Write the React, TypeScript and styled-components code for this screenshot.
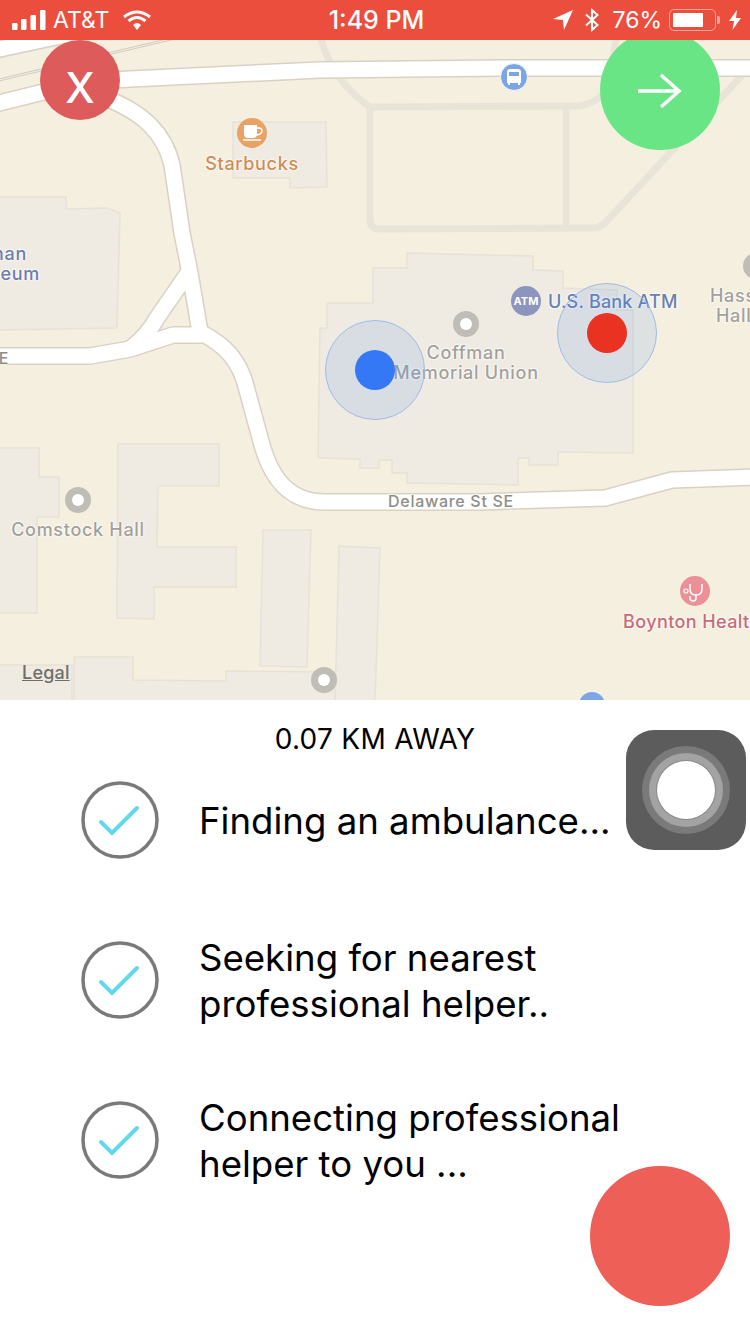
import styled, { createGlobalStyle } from "styled-components";

const GlobalStyle = createGlobalStyle`
  html, body {
    margin: 0;
    padding: 0;
    background: #fff;
    font-family: Inter, "Liberation Sans", sans-serif;
  }
`;

const buildings = [
  "233,122 326,122 327,187 290,188 290,178 233,178",
  "-2,197 66,197 66,209 107,208 120,213 117,328 -2,330",
  "320,328 327,328 327,303 373,303 373,268 407,268 407,253 533,256 533,270 563,271 563,288 617,290 617,310 633,310 633,453 558,452 558,465 529,465 529,458 518,458 518,485 407,483 407,473 392,473 392,460 379,460 379,468 360,468 360,459 318,458",
  "-2,448 39,448 39,477 59,477 59,517 37,517 37,613 -2,613",
  "118,444 219,444 219,486 158,486 157,547 236,547 236,587 154,587 154,619 117,618",
  "263,530 311,530 307,667 260,666",
  "339,546 380,548 375,702 335,702",
  "74,657 133,657 133,680 226,681 226,671 335,672 335,702 74,702",
  "-2,665 72,665 72,702 -2,702",
];

const roads = [
  "M-5 104 L60 88 Q90 81 130 79 L320 70 L500 68 L750 68",
  "M100 96 C145 112 165 135 172 165 L182 233 L190 273 L200 332 C225 345 240 360 247 390 L262 445 C272 480 290 502 325 502 L480 502 L605 498 L672 480 L755 477",
  "M-5 356 L90 356 L130 349 L173 335 L204 335",
  "M130 349 Q148 335 157 318 L188 273",
  "M-5 50 L70 34",
];

const serviceRoads = [
  "M320 36 C328 65 345 90 370 107 L370 220 Q370 229 380 229 L592 228 Q600 228 606 222 L745 72",
  "M370 107 L580 106 Q600 102 610 85 L616 38",
  "M566 107 L566 228",
];

const MapDrawing = () => (
  <MapSvg viewBox="0 40 750 660">
    {buildings.map((points) => (
      <polygon key={points} points={points} fill="#efebe3" stroke="#e6e2d5" strokeWidth="1.5" />
    ))}
    {serviceRoads.map((d) => (
      <path key={d} d={d} fill="none" stroke="#e8e5d8" strokeWidth="7" />
    ))}
    <path d="M-5 81 L175 38" fill="none" stroke="#cfcbc0" strokeWidth="3" />
    <path d="M-5 81 L175 38" fill="none" stroke="#f5efe0" strokeWidth="1" />
    {roads.map((d) => (
      <path key={d + "edge"} d={d} fill="none" stroke="#d9d1c4" strokeWidth="18" strokeLinejoin="round" />
    ))}
    {roads.map((d) => (
      <path key={d} d={d} fill="none" stroke="#ffffff" strokeWidth="15" strokeLinejoin="round" />
    ))}

    {[
      [466, 324],
      [78, 500],
      [324, 680],
      [756, 266],
    ].map(([cx, cy]) => (
      <g key={cx}>
        <circle cx={cx} cy={cy} r="13" fill="#bfbdb6" />
        <circle cx={cx} cy={cy} r="6" fill="#fff" />
      </g>
    ))}

    <circle cx="252" cy="133" r="15" fill="#e8a264" />
    <path d="M244 125 H257 V134 Q257 138 253 138 H248 Q244 138 244 134 Z" fill="#fff" />
    <path d="M257 128 H259 Q262 128 262 131 Q262 134 257 135" fill="none" stroke="#fff" strokeWidth="1.5" />
    <path d="M243 140 H261" stroke="#fff" strokeWidth="1.5" />

    <circle cx="514" cy="77" r="13.5" fill="#7ba5e6" stroke="#f5f7fa" strokeWidth="1" />
    <path d="M507 72 Q507 69 510 69 H518 Q521 69 521 72 V83 H507 Z" fill="#fff" />
    <rect x="509" y="72" width="10" height="4" fill="#7ba5e6" />
    <path d="M509 83 V85 M519 83 V85" stroke="#fff" strokeWidth="2" />

    <circle cx="695" cy="591" r="15" fill="#ea9096" />
    <path d="M690 584 V589 Q690 595 696 595 Q702 595 702 589 V584" fill="none" stroke="#fff" strokeWidth="1.5" />
    <path d="M696 595 V598 Q696 601 693 601 Q690 601 690 598 V596" fill="none" stroke="#fff" strokeWidth="1.5" />
    <circle cx="686" cy="591" r="2" fill="none" stroke="#fff" strokeWidth="1.2" />

    <circle cx="592" cy="705" r="13" fill="#7ba5e6" />
  </MapSvg>
);

const Cell = () => (
  <svg width="34" height="20" viewBox="0 0 34 20">
    <rect x="0" y="13" width="5.5" height="7" rx="1.2" fill="#fff" />
    <rect x="9" y="9" width="5.5" height="11" rx="1.2" fill="#fff" />
    <rect x="18.5" y="5" width="5.5" height="15" rx="1.2" fill="#fff" />
    <rect x="28" y="0" width="5.5" height="20" rx="1.2" fill="#fff" />
  </svg>
);

const Wifi = () => (
  <svg width="28" height="20" viewBox="0 0 28 20">
    <path d="M1 7 Q14 -3 27 7" fill="none" stroke="#fff" strokeWidth="3" />
    <path d="M5.5 11 Q14 4 22.5 11" fill="none" stroke="#fff" strokeWidth="3" />
    <path d="M10 15 Q14 11 18 15 L14 20 Z" fill="#fff" />
  </svg>
);

const LocationArrow = () => (
  <LocationIcon width="20" height="20" viewBox="0 0 20 20">
    <path d="M0 9 L20 0 L11 20 L10 10 Z" fill="#fff" />
  </LocationIcon>
);

const Bluetooth = () => (
  <svg width="14" height="24" viewBox="0 0 14 24">
    <path d="M1 6.5 L12.5 17 L7 22 V2 L12.5 7 L1 17.5" fill="none" stroke="#fff" strokeWidth="2" />
  </svg>
);

const Bolt = () => (
  <svg width="12" height="20" viewBox="0 0 12 20">
    <path d="M8 0 L0 11 H5 L3.5 20 L12 8 H7 Z" fill="#fff" />
  </svg>
);

const Arrow = () => (
  <svg width="44" height="38" viewBox="0 0 44 38">
    <path d="M0 19 H41 M23 3 L41 19 L23 35" fill="none" stroke="#fff" strokeWidth="3.5" />
  </svg>
);

const Check = () => (
  <svg width="78" height="78" viewBox="0 0 78 78">
    <circle cx="39" cy="39" r="37" fill="none" stroke="#7a7a7a" strokeWidth="3.5" />
    <path d="M20 41 L31 52 L56 27" fill="none" stroke="#5fd8f0" strokeWidth="4" strokeLinecap="round" />
  </svg>
);

const steps = [
  ["Finding an ambulance..."],
  ["Seeking for nearest", "professional helper.."],
  ["Connecting professional", "helper to you ..."],
];

const App = () => {
  return (
    <Screen>
      <GlobalStyle />
      <StatusBar>
        <StatusGroup>
          <Cell />
          <Carrier>AT&amp;T</Carrier>
          <Wifi />
        </StatusGroup>
        <Clock>1:49 PM</Clock>
        <StatusGroup>
          <LocationArrow />
          <Bluetooth />
          <Percent>76%</Percent>
          <Battery>
            <BatteryFill />
          </Battery>
          <BatteryCap />
          <Bolt />
        </StatusGroup>
      </StatusBar>

      <MapArea>
        <MapDrawing />

        <Label $x={252} $y={163} $color="#d08b4e">Starbucks</Label>
        <Label $x={27} $y={253} $color="#6d7cab" $anchor="end">man</Label>
        <Label $x={40} $y={273} $color="#6d7cab" $anchor="end">Museum</Label>
        <Label $x={9} $y={358} $color="#8f8d88" $anchor="end" $size={16}>St SE</Label>
        <Label $x={466} $y={352} $color="#a3a09a">Coffman</Label>
        <Label $x={466} $y={372} $color="#a3a09a">Memorial Union</Label>
        <Label $x={548} $y={301} $color="#6a7fb0" $anchor="start" $spacing={0.2}>U.S. Bank ATM</Label>
        <Label $x={710} $y={295} $color="#a3a09a" $anchor="start">Hass</Label>
        <Label $x={716} $y={315} $color="#a3a09a" $anchor="start">Hall</Label>
        <Label $x={78} $y={529} $color="#a3a09a">Comstock Hall</Label>
        <Label $x={451} $y={501} $color="#8f8d88" $size={16}>Delaware St SE</Label>
        <Label $x={623} $y={621} $color="#c76c74" $anchor="start" $spacing={0.4}>Boynton Health</Label>
        <LegalLink>Legal</LegalLink>
        <AtmPin>ATM</AtmPin>

        <Pulse $x={375} $y={370}>
          <PulseDot $color="#3478f6" />
        </Pulse>
        <Pulse $x={607} $y={333}>
          <PulseDot $color="#e93222" />
        </Pulse>

        <CloseButton>X</CloseButton>
        <NextButton>
          <Arrow />
        </NextButton>
      </MapArea>

      <Panel>
        <Distance>0.07 KM AWAY</Distance>
        <StepList>
          {steps.map((lines) => (
            <Step key={lines[0]}>
              <Check />
              <StepText>
                {lines.map((line) => (
                  <div key={line}>{line}</div>
                ))}
              </StepText>
            </Step>
          ))}
        </StepList>
        <AssistiveTouch>
          <TouchOuter>
            <TouchMiddle>
              <TouchCore />
            </TouchMiddle>
          </TouchOuter>
        </AssistiveTouch>
        <ActionButton />
      </Panel>
    </Screen>
  );
};

const Screen = styled.div`
  width: 750px;
  height: 1334px;
  display: flex;
  flex-direction: column;
  overflow: hidden;
  background: #fff;
`;

const StatusBar = styled.div`
  position: relative;
  z-index: 2;
  height: 40px;
  flex: none;
  display: flex;
  align-items: center;
  justify-content: space-between;
  padding: 0 9px 0 12px;
  background: #ec4e3d;
  color: #fff;
`;

const StatusGroup = styled.div`
  display: flex;
  align-items: center;
  gap: 9px;
`;

const Carrier = styled.span`
  font-size: 23px;
  margin: 0 5px 0 -2px;
`;

const Clock = styled.span`
  position: absolute;
  left: 3px;
  right: 0;
  text-align: center;
  font-size: 25px;
  font-weight: 500;
`;

const LocationIcon = styled.svg`
  margin-right: 3px;
`;

const Percent = styled.span`
  font-size: 23px;
  margin: 0 -2px 0 4px;
`;

const Battery = styled.div`
  box-sizing: border-box;
  width: 47px;
  height: 22px;
  padding: 3px;
  border: 1.5px solid #f6a79e;
  border-radius: 5px;
  margin-right: -8px;
`;

const BatteryFill = styled.div`
  width: 76%;
  height: 100%;
  background: #fff;
  border-radius: 1px;
`;

const BatteryCap = styled.div`
  width: 3px;
  height: 8px;
  background: #f6a79e;
  border-radius: 0 2px 2px 0;
`;

const MapArea = styled.div`
  position: relative;
  height: 660px;
  flex: none;
  background: #f5efe0;
`;

const MapSvg = styled.svg`
  display: block;
  width: 750px;
  height: 660px;
`;

const anchors = { start: "0", middle: "-50%", end: "-100%" };

const Label = styled.span<{
  $x: number;
  $y: number;
  $color: string;
  $size?: number;
  $spacing?: number;
  $anchor?: "start" | "middle" | "end";
}>`
  position: absolute;
  left: ${(p) => p.$x}px;
  top: ${(p) => p.$y - 40}px;
  transform: translate(${(p) => anchors[p.$anchor ?? "middle"]}, -50%);
  white-space: nowrap;
  font-size: ${(p) => p.$size ?? 18}px;
  font-weight: 500;
  letter-spacing: ${(p) => p.$spacing ?? 0.7}px;
  color: ${(p) => p.$color};
  text-shadow: 0 0 2px #fff, 0 0 2px #fff, 0 0 3px #fff;
`;

const LegalLink = styled.span`
  position: absolute;
  left: 22px;
  top: 622px;
  font-size: 18px;
  font-weight: 500;
  letter-spacing: 0.2px;
  color: #6f6e6a;
  text-decoration: underline;
`;

const AtmPin = styled.span`
  position: absolute;
  left: 511px;
  top: 246px;
  width: 30px;
  height: 30px;
  display: flex;
  align-items: center;
  justify-content: center;
  border-radius: 50%;
  background: #8b95bd;
  color: #fff;
  font-size: 11px;
  font-weight: 700;
`;

const Pulse = styled.div<{ $x: number; $y: number }>`
  position: absolute;
  box-sizing: border-box;
  left: ${(p) => p.$x - 50}px;
  top: ${(p) => p.$y - 90}px;
  width: 100px;
  height: 100px;
  display: flex;
  align-items: center;
  justify-content: center;
  border-radius: 50%;
  border: 1.5px solid #9cbde6;
  background: rgba(80, 140, 235, 0.14);
`;

const PulseDot = styled.div<{ $color: string }>`
  width: 40px;
  height: 40px;
  border-radius: 50%;
  background: ${(p) => p.$color};
`;

const CloseButton = styled.div`
  position: absolute;
  box-sizing: border-box;
  left: 40px;
  top: 0;
  width: 80px;
  height: 80px;
  padding-top: 14px;
  display: flex;
  align-items: center;
  justify-content: center;
  border-radius: 50%;
  background: #de5b5b;
  color: #fff;
  font-size: 42px;
  font-weight: 500;
`;

const NextButton = styled.div`
  position: absolute;
  box-sizing: border-box;
  left: 600px;
  top: -10px;
  width: 120px;
  height: 120px;
  padding-top: 2px;
  display: flex;
  align-items: center;
  justify-content: center;
  border-radius: 50%;
  background: #69e585;
`;

const Panel = styled.div`
  position: relative;
  flex: 1;
  padding-top: 21px;
  background: #fff;
  color: #000;
`;

const Distance = styled.div`
  height: 36px;
  line-height: 36px;
  text-align: center;
  font-size: 28px;
  letter-spacing: 0.3px;
`;

const StepList = styled.div`
  display: flex;
  flex-direction: column;
  gap: 82px;
  margin-top: 24px;
  padding-left: 81px;
`;

const Step = styled.div`
  display: flex;
  align-items: center;
  gap: 40px;
  height: 78px;
`;

const StepText = styled.div`
  margin-top: 2px;
  font-size: 36.6px;
  line-height: 46px;
  white-space: nowrap;
`;

const AssistiveTouch = styled.div`
  position: absolute;
  left: 626px;
  top: 30px;
  width: 120px;
  height: 120px;
  display: flex;
  align-items: center;
  justify-content: center;
  border-radius: 28px;
  background: #5c5c5c;
`;

const TouchOuter = styled.div`
  width: 88px;
  height: 88px;
  display: flex;
  align-items: center;
  justify-content: center;
  border-radius: 50%;
  background: #7a7a7a;
`;

const TouchMiddle = styled.div`
  width: 74px;
  height: 74px;
  display: flex;
  align-items: center;
  justify-content: center;
  border-radius: 50%;
  background: #a3a3a3;
`;

const TouchCore = styled.div`
  width: 58px;
  height: 58px;
  border-radius: 50%;
  background: #fff;
  box-shadow: 0 0 0 1px #8a8a8a;
`;

const ActionButton = styled.div`
  position: absolute;
  left: 590px;
  top: 466px;
  width: 140px;
  height: 140px;
  border-radius: 50%;
  background: #ee5f58;
`;

export default App;
